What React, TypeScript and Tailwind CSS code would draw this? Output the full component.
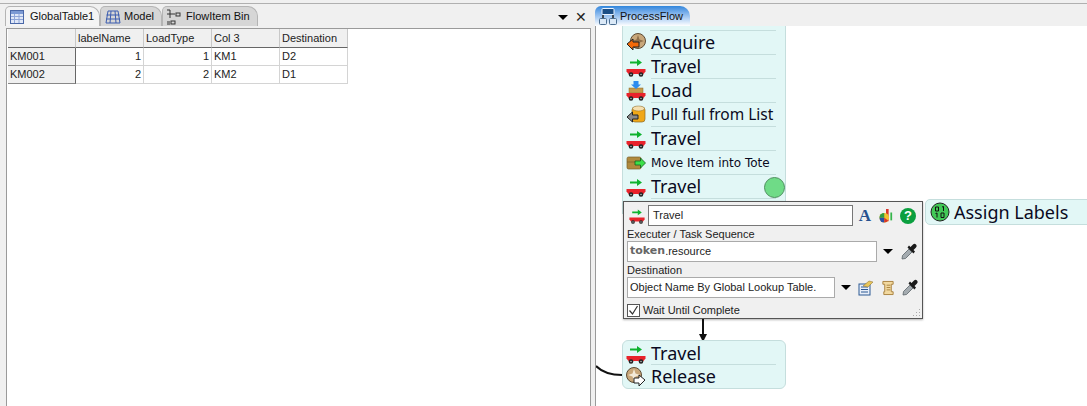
const uiFont = { fontFamily: '"Liberation Sans", sans-serif' };
const bigFont = { fontFamily: '"Noto Sans", sans-serif' };
const wideFont = { fontFamily: '"DejaVu Sans", sans-serif' };

function Wagon({ cargo, size = 20 }: { cargo?: "arrow" | "box"; size?: number }) {
  return (
    <svg width={size} height={size} viewBox="0 0 20 20" className="shrink-0">
      {cargo === "box" ? (
        <>
          <rect x="3" y="7" width="14" height="5" fill="#c49a4a" stroke="#8a6a2a" strokeWidth="0.5" />
          <path d="M7.5 0h5v3.5h2.5L10 8 5 3.5h2.5z" fill="#2a8cf0" />
        </>
      ) : (
        <path d="M4 4.5h7V2l5 3.5L11 9V6.500H4z" fill="#0eb22e" />
      )}
      <path d="M0.500 12h19v2.500l-2 2.500h-15l-2-2.500z" fill="#e8232b" />
      <circle cx="5" cy="17.500" r="2.300" fill="#222" />
      <circle cx="15" cy="17.500" r="2.300" fill="#222" />
      <circle cx="5" cy="17.500" r="0.800" fill="#bbb" />
      <circle cx="15" cy="17.500" r="0.800" fill="#bbb" />
    </svg>
  );
}

function AcquireIcon() {
  return (
    <svg width="20" height="20" viewBox="0 0 20 20" className="shrink-0">
      <circle cx="12" cy="8" r="7.500" fill="#c8a77a" stroke="#5d4a34" strokeWidth="1" />
      <path d="M12 2l1.500 4.500L18 8l-4.500 1.500L12 14l-1.500-4.500L6 8l4.500-1.500z" fill="#8f6f4a" />
      <path d="M1 11l6-5v3h6v5H7v3z" fill="#f26a0a" stroke="#222" strokeWidth="1" />
    </svg>
  );
}

function ReleaseIcon() {
  return (
    <svg width="20" height="20" viewBox="0 0 20 20" className="shrink-0">
      <circle cx="8" cy="8" r="7.500" fill="#c8a77a" stroke="#5d4a34" strokeWidth="1" />
      <path d="M8 2l1.500 4.500L14 8l-4.500 1.500L8 14l-1.500-4.500L2 8l4.500-1.500z" fill="#f3ead8" />
      <path d="M19 13l-6-5v3H8v5h5v3z" fill="#fff" stroke="#222" strokeWidth="1" />
    </svg>
  );
}

function PullIcon() {
  return (
    <svg width="20" height="20" viewBox="0 0 20 20" className="shrink-0">
      <rect x="6" y="2" width="13" height="15" rx="3" fill="#f0a818" stroke="#8a6a2a" strokeWidth="0.700" />
      <ellipse cx="12.500" cy="3.500" rx="6" ry="2.500" fill="#f6e0b0" stroke="#8a6a2a" strokeWidth="0.500" />
      <path d="M1 12l5.500-5v3H12v4H6.500v3z" fill="#8a8a8a" stroke="#222" strokeWidth="1" />
    </svg>
  );
}

function MoveIcon() {
  return (
    <svg width="20" height="20" viewBox="0 0 20 20" className="shrink-0">
      <rect x="1" y="4" width="14" height="12" rx="1.500" fill="#b08a3e" stroke="#7a5f2a" strokeWidth="0.700" />
      <path d="M1 9h14" stroke="#7a5f2a" strokeWidth="0.700" />
      <path d="M19.500 10l-5-5v3H9v4h5.500v3z" fill="#3ce04a" stroke="#155f1c" strokeWidth="0.800" />
    </svg>
  );
}

function AssignIcon() {
  return (
    <svg width="20" height="20" viewBox="0 0 20 20" className="shrink-0">
      <circle cx="10" cy="10" r="9" fill="#42c957" stroke="#222" strokeWidth="1" />
      <path d="M5.500 5h3v4h-3zM12 5l1.500-.5V9M5.500 11.500l1.500-.5v4.500M11 11h3v4.500h-3z" fill="none" stroke="#111" strokeWidth="1" />
    </svg>
  );
}

function TableIcon() {
  return (
    <svg width="14" height="14" viewBox="0 0 14 14" className="shrink-0">
      <rect x="0.500" y="0.500" width="13" height="13" fill="#dfe7f7" stroke="#4a68a8" />
      <rect x="1" y="1" width="12" height="3" fill="#7c9ad4" />
      <path d="M1 6.500h12M1 9.500h12M4.500 4v9M9 4v9" stroke="#8fa6d8" />
    </svg>
  );
}

function ModelIcon() {
  return (
    <svg width="16" height="14" viewBox="0 0 16 14" className="shrink-0">
      <path d="M3 1h10l2 12H1zM1.500 5h13M1 9h14M6 1l-1 12M10 1l1 12" fill="none" stroke="#3b5cb0" strokeWidth="1" />
    </svg>
  );
}

function BinIcon() {
  return (
    <svg width="14" height="16" viewBox="0 0 14 16" className="shrink-0">
      <path d="M0 1h3M0 5h3M3 1v8M3 5h5" fill="none" stroke="#333" strokeWidth="1" />
      <rect x="9" y="4" width="4" height="3" fill="none" stroke="#333" />
      <rect x="4" y="12" width="4" height="3" fill="none" stroke="#333" />
      <path d="M0 13h3M0 15h3" stroke="#333" />
    </svg>
  );
}

function FlowIcon() {
  return (
    <svg width="18" height="17" viewBox="0 0 18 17" className="shrink-0">
      <rect x="3" y="0.500" width="12" height="6" rx="1" fill="#1c4f86" stroke="#e8f2ff" />
      <rect x="0.500" y="10.500" width="7" height="6" rx="1" fill="#dbe9f7" stroke="#4a6d90" />
      <rect x="10.500" y="10.500" width="7" height="6" rx="1" fill="#dbe9f7" stroke="#4a6d90" />
      <path d="M4 7v3M14 7v3" stroke="#222" strokeWidth="1.500" />
    </svg>
  );
}

function Dropper() {
  return (
    <svg width="17" height="17" viewBox="0 0 17 17" className="shrink-0">
      <path d="M1 16l.5-3.500L8 6l3 3-6.500 6.500z" fill="#a4abb0" stroke="#5b6368" strokeWidth="0.800" />
      <path d="M6.500 4.500l6 6 1.500-2-1.500-1.500 2.500-2.500a2 2 0 0 0-3-3L9.500 4 8 2.500z" fill="#1a1a1a" />
    </svg>
  );
}

function Caret() {
  return <div className="w-0 h-0 border-x-[5px] border-x-transparent border-t-[5px] border-t-black shrink-0" />;
}

function FontIcon() {
  return (
    <span className="w-[14px] text-center text-[17px] font-bold leading-none text-[#27508f]" style={{ fontFamily: '"Liberation Serif", serif' }}>
      A
    </span>
  );
}

function ChartIcon() {
  return (
    <svg width="14" height="18" viewBox="0 0 16 18" className="shrink-0">
      <rect x="8" y="1" width="3" height="14" fill="#d9342b" />
      <rect x="13" y="5" width="2" height="9" fill="#35b54a" />
      <circle cx="6" cy="11" r="5.500" fill="#f1c22e" />
      <path d="M6 11V5.500A5.500 5.500 0 0 0 0.500 11z" fill="#2f9e44" />
      <path d="M6 11H0.500A5.500 5.500 0 0 0 6 16.500z" fill="#2a4fa8" />
      <path d="M6 11v5.500A5.500 5.500 0 0 0 10.500 14z" fill="#d9342b" />
    </svg>
  );
}

function HelpIcon() {
  return (
    <div className="w-4 h-4 rounded-full bg-[#0b9f3f] flex items-center justify-center text-white text-[13px] font-bold leading-none" style={uiFont}>
      ?
    </div>
  );
}

function NoteIcon() {
  return (
    <svg width="16" height="16" viewBox="0 0 16 16" className="shrink-0">
      <rect x="1" y="4" width="11" height="11" fill="#e8eef8" stroke="#2d5a94" />
      <path d="M3 7h7M3 9.500h7M3 12h7" stroke="#2d5a94" />
      <path d="M5 6l6-5 4 1-5 5z" fill="#e8c65a" stroke="#8a6a2a" strokeWidth="0.500" />
    </svg>
  );
}

function ScrollIcon() {
  return (
    <svg width="14" height="16" viewBox="0 0 15 16" className="shrink-0">
      <path d="M2 1h11v3h-2v8h2v3H3V12h1V4H2z" fill="#f2d9a0" stroke="#a8803c" />
      <path d="M6 5h4M6 7.500h4M6 10h4" stroke="#a8803c" />
    </svg>
  );
}

function Tab({ icon, label, width, gap, active }: { icon: React.ReactNode; label: string; width: string; gap: string; active?: boolean }) {
  return (
    <div className={`${width} ${gap} ${active ? "bg-[#f4f4f4]" : "bg-[#d6d6d6]"} h-[20px] flex items-center pl-[4px] rounded-tl-[5px] rounded-tr-[10px] border border-b-0 border-[#b4b4b4] text-[11px] text-[#111]`}>
      {icon}
      <span>{label}</span>
    </div>
  );
}

const headers = ["", "labelName", "LoadType", "Col 3", "Destination"];
const rows = [
  ["KM001", "1", "1", "KM1", "D2"],
  ["KM002", "2", "2", "KM2", "D1"],
];

function GlobalTable() {
  return (
    <div className="grid grid-cols-[68px_68px_68px_68px_68px] w-max text-[11px] text-[#222] leading-none">
      {headers.map((h, i) => (
        <div key={i} className="h-[19px] bg-[#f0f0f0] border-r border-b border-r-[#c8c8c8] border-b-[#666] last:border-r-[#666] pl-[2px] flex items-center">
          {h}
        </div>
      ))}
      {rows.map((r) =>
        r.map((c, i) => (
          <div
            key={r[0] + i}
            className={`h-[18px] flex items-center border-b px-[2px] ${
              i === 0
                ? "bg-[#f0f0f0] border-r border-r-[#666] border-b-[#888]"
                : "bg-white border-r border-r-[#d4d4d4] border-b-[#d4d4d4]"
            } ${i === 1 || i === 2 ? "justify-end" : ""}`}
          >
            {c}
          </div>
        ))
      )}
    </div>
  );
}

function Row({ icon, label, small, mid }: { icon: React.ReactNode; label: string; small?: boolean; mid?: boolean }) {
  return (
    <div className="h-[24px] flex items-center pl-[3px]">
      <div className="w-[25px] shrink-0 flex">{icon}</div>
      <div className="flex-1 h-full mr-[9px] flex items-center border-b border-[#c5dedd]">
        <span
          className={`whitespace-nowrap text-[#0a0a1e] ${small ? "text-[12px]" : mid ? "text-[15.500px]" : "text-[18px]"}`}
          style={small ? wideFont : bigFont}
        >
          {label}
        </span>
      </div>
    </div>
  );
}

export default function App() {
  return (
    <div className="w-[1087px] h-[406px] overflow-hidden flex bg-[#f0f0f0]" style={uiFont}>
      {/* left dock */}
      <div className="w-[591px] shrink-0 flex flex-col pl-[4px]">
        <div className="h-[3px] -ml-[4px] border-b border-[#b0b0b0] box-content" />
        <div className="h-[22px] pt-[2px] flex items-end pl-[1px] relative shrink-0">
          <Tab icon={<TableIcon />} label="GlobalTable1" gap="gap-[6px]" width="w-[95px]" active />
          <Tab icon={<ModelIcon />} label="Model" gap="gap-[3px]" width="w-[62px]" />
          <Tab icon={<BinIcon />} label="FlowItem Bin" gap="gap-[5px]" width="w-[96px]" />
          <div className="absolute right-[4px] top-[6px] flex items-center gap-[7px]">
            <Caret />
            <span className="text-[14px] leading-none text-[#222]">✕</span>
          </div>
        </div>
        <div className="flex-1 bg-white border-t border-l border-r border-[#9a9a9a] ml-[2px] pl-px mt-[2px]">
          <GlobalTable />
        </div>
      </div>

      {/* right dock */}
      <div className="flex-1 flex flex-col pl-[4px] relative">
        <div className="h-[3px] border-b border-[#b0b0b0] box-content -ml-[4px]" />
        <div className="h-[22px] pt-[2px] flex items-end shrink-0">
          <div className="w-[95px] h-[20px] rounded-t-[6px] rounded-tr-[10px] bg-gradient-to-b from-[#2f86dc] to-white flex items-center gap-[3px] pl-[4px] text-[11px] text-[#111]">
            <FlowIcon />
            <span>ProcessFlow</span>
          </div>
        </div>
        <div className="flex-1 bg-white border-l border-[#9a9a9a] relative overflow-hidden">
          {/* main activity stack */}
          <div className="absolute left-[26px] -top-[22px] w-[164px] h-[210px] bg-[#e2f7f6] border-x border-[#c5dedd] pt-[26px]">
            <div className="border-t border-[#c5dedd] ml-[27px] mr-[9px]" />
            <Row icon={<AcquireIcon />} label="Acquire" />
            <Row icon={<Wagon />} label="Travel" />
            <Row icon={<Wagon cargo="box" />} label="Load" />
            <Row icon={<PullIcon />} label="Pull full from List" mid />
            <Row icon={<Wagon />} label="Travel" />
            <Row icon={<MoveIcon />} label="Move Item into Tote" small />
            <Row icon={<Wagon />} label="Travel" />
            <div className="absolute left-[141px] top-[173px] w-[21px] h-[21px] rounded-full bg-[#6fdb87] border border-[#4f8f5f]" />
          </div>

          {/* properties popup */}
          <div className="absolute left-[27px] top-[175px] w-[300px] h-[118px] bg-[#f0f0f0] border border-[#555] pl-[3px] pt-[3px] text-[11px] text-[#222] shadow-[0_1px_2px_rgba(0,0,0,0.3)]">
            <div className="flex items-center h-[21px] pl-[2px]">
              <Wagon size={16} />
              <div className="ml-[3px] w-[205px] h-[21px] bg-white border border-[#777] flex items-center pl-[4px]">Travel</div>
              <div className="ml-[5px] flex items-center gap-[7px]">
                <FontIcon />
                <ChartIcon />
                <HelpIcon />
              </div>
            </div>
            <div className="mt-px leading-[14px]">Executer / Task Sequence</div>
            <div className="flex items-center">
              <div className="w-[250px] h-[21px] bg-white border border-[#aaa] flex items-center pl-[2px]">
                <span className="font-bold text-[#666] text-[11px]" style={wideFont}>token</span>
                <span>.resource</span>
              </div>
              <div className="ml-[6px] mr-[8px]"><Caret /></div>
              <Dropper />
            </div>
            <div className="mt-px leading-[14px]">Destination</div>
            <div className="flex items-center">
              <div className="w-[208px] h-[21px] bg-white border border-[#aaa] flex items-center pl-[2px] whitespace-nowrap">Object Name By Global Lookup Table.</div>
              <div className="ml-[6px] mr-[7px]"><Caret /></div>
              <div className="flex items-center gap-[7px]">
                <NoteIcon />
                <ScrollIcon />
                <Dropper />
              </div>
            </div>
            <label className="flex items-center gap-[3px] mt-[4px]">
              <span className="w-[13px] h-[13px] bg-white border border-[#555] flex items-center justify-center">
                <svg width="11" height="11" viewBox="0 0 11 11"><path d="M1.500 5.500l3 3.500 5-8" fill="none" stroke="#333" strokeWidth="1.200" /></svg>
              </span>
              <span>Wait Until Complete</span>
            </label>
            <svg width="9" height="9" viewBox="0 0 9 9" className="absolute right-[1px] bottom-[1px]">
              <path d="M7 1h1v1H7zM4 4h1v1H4zM7 4h1v1H7zM1 7h1v1H1zM4 7h1v1H4zM7 7h1v1H7z" fill="#aaa" />
            </svg>
          </div>

          {/* assign labels node */}
          <div className="absolute left-[329px] top-[173px] w-[170px] h-[26px] bg-[#e2f7f6] border border-[#c5dedd] rounded-[5px] flex items-center gap-[4px] pl-[4px] text-[18px] text-[#0a0a1e]" style={bigFont}>
            <AssignIcon />
            <span>Assign Labels</span>
          </div>

          {/* connector + bottom node */}
          <svg width="130" height="90" viewBox="0 0 130 90" className="absolute left-0 top-[292px]">
            <path d="M107 1v18" stroke="#111" strokeWidth="2" />
            <path d="M103 16h8l-4 8z" fill="#111" />
            <path d="M0 48c6 6 14 9 26 9" fill="none" stroke="#111" strokeWidth="2" />
          </svg>
          <div className="absolute left-[26px] top-[314px] w-[164px] h-[49px] bg-[#e2f7f6] border border-[#c5dedd] rounded-[6px] pt-[1px]" style={bigFont}>
            <div className="h-[23px] flex items-center pl-[3px]">
              <div className="w-[25px] flex"><Wagon /></div>
              <div className="flex-1 h-full mr-[9px] flex items-center border-b border-[#c5dedd] text-[18px] text-[#0a0a1e]">Travel</div>
            </div>
            <div className="h-[23px] flex items-center pl-[3px]">
              <div className="w-[25px] flex"><ReleaseIcon /></div>
              <span className="text-[18px] text-[#0a0a1e]">Release</span>
            </div>
          </div>
        </div>
      </div>
    </div>
  );
}
